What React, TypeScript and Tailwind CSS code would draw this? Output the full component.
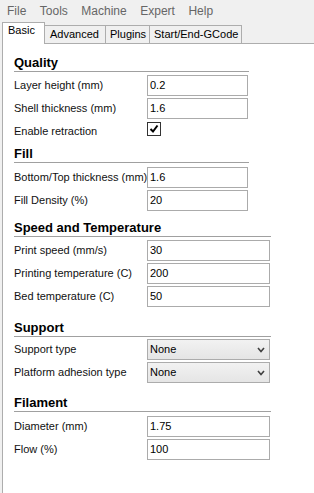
import React from 'react';

type Row =
  | { kind: 'text'; label: string; value: string }
  | { kind: 'check'; label: string; checked: boolean }
  | { kind: 'select'; label: string; value: string };

type Section = { title: string; wide: boolean; mt: string; rowsMt: string; rows: Row[] };

const SECTIONS: Section[] = [
  {
    title: 'Quality',
    wide: false,
    mt: 'mt-[11px]',
    rowsMt: 'mt-[3px]',
    rows: [
      { kind: 'text', label: 'Layer height (mm)', value: '0.2' },
      { kind: 'text', label: 'Shell thickness (mm)', value: '1.6' },
      { kind: 'check', label: 'Enable retraction', checked: true },
    ],
  },
  {
    title: 'Fill',
    wide: false,
    mt: 'mt-[4px]',
    rowsMt: 'mt-[4px]',
    rows: [
      { kind: 'text', label: 'Bottom/Top thickness (mm)', value: '1.6' },
      { kind: 'text', label: 'Fill Density (%)', value: '20' },
    ],
  },
  {
    title: 'Speed and Temperature',
    wide: true,
    mt: 'mt-[9px]',
    rowsMt: 'mt-[3px]',
    rows: [
      { kind: 'text', label: 'Print speed (mm/s)', value: '30' },
      { kind: 'text', label: 'Printing temperature (C)', value: '200' },
      { kind: 'text', label: 'Bed temperature (C)', value: '50' },
    ],
  },
  {
    title: 'Support',
    wide: true,
    mt: 'mt-[13px]',
    rowsMt: 'mt-[2px]',
    rows: [
      { kind: 'select', label: 'Support type', value: 'None' },
      { kind: 'select', label: 'Platform adhesion type', value: 'None' },
    ],
  },
  {
    title: 'Filament',
    wide: true,
    mt: 'mt-[12px]',
    rowsMt: 'mt-[4px]',
    rows: [
      { kind: 'text', label: 'Diameter (mm)', value: '1.75' },
      { kind: 'text', label: 'Flow (%)', value: '100' },
    ],
  },
];

const MENU = ['File', 'Tools', 'Machine', 'Expert', 'Help'];

function Field({ row, wide }: { row: Row; wide: boolean }) {
  const w = wide ? 'w-[123px]' : 'w-[101px]';
  if (row.kind === 'check') {
    return (
      <div className="h-[21px] flex items-start pt-[1px]">
        <div className="w-[14px] h-[14px] border border-[#333] bg-white flex items-center justify-center">
          {row.checked && (
            <svg width="10" height="10" viewBox="0 0 10 10">
              <path d="M1.5 5 L4 7.5 L8.5 1.5" fill="none" stroke="#000" strokeWidth="2" />
            </svg>
          )}
        </div>
      </div>
    );
  }
  if (row.kind === 'select') {
    return (
      <div
        className={`${w} h-[21px] border border-[#acacac] bg-gradient-to-b from-[#f2f2f2] to-[#e5e5e5] flex items-center justify-between pl-[2px] pr-[4px] text-black`}
      >
        <span>{row.value}</span>
        <svg width="8" height="6" viewBox="0 0 8 6">
          <path d="M1 1 L4 4.5 L7 1" fill="none" stroke="#404040" strokeWidth="1.6" />
        </svg>
      </div>
    );
  }
  return (
    <div className={`${w} h-[21px] border border-[#ababab] bg-white flex items-center pl-[2px] text-black`}>
      {row.value}
    </div>
  );
}

function SettingsSection({ section }: { section: Section }) {
  return (
    <div className={section.mt}>
      <div
        className={`${section.wide ? 'w-[257px]' : 'w-[235px]'} h-[17px] leading-[16px] border-b border-[#a0a0a0] text-[13px] font-bold text-black`}
      >
        {section.title}
      </div>
      <div className={`${section.rowsMt} flex flex-col gap-[2px]`}>
        {section.rows.map((row) => (
          <div key={row.label} className="flex items-start">
            <div className="w-[133px] h-[21px] flex items-center whitespace-nowrap text-[#111]">{row.label}</div>
            <Field row={row} wide={section.wide} />
          </div>
        ))}
      </div>
    </div>
  );
}

export default function App() {
  return (
    <div className="w-[314px] h-[493px] bg-[#f0f0f0] overflow-hidden flex flex-col font-['Liberation_Sans',Arial,sans-serif] text-[11px]">
      {/* Menu bar */}
      <div className="h-[22px] flex items-center pl-[7px] gap-[13.5px] text-[12px] text-[#666]">
        {MENU.map((m) => (
          <span key={m}>{m}</span>
        ))}
      </div>

      {/* Tabs */}
      <div className="h-[22px] flex items-end pl-[2px] text-black">
        <div className="w-[43px] h-[22px] bg-white border-l border-t border-r border-[#adadad] pl-[5px] pb-[6px] flex items-end">
          Basic
        </div>
        <div className="w-[61px] h-[19px] border-t border-r border-b border-[#adadad] pl-[5px] flex items-center">
          Advanced
        </div>
        <div className="w-[44px] h-[19px] border-t border-r border-b border-[#adadad] pl-[4px] flex items-center">
          Plugins
        </div>
        <div className="w-[92px] h-[19px] border-t border-r border-b border-[#adadad] pl-[4px] flex items-center">
          Start/End-GCode
        </div>
        <div className="flex-1 h-[19px] border-b border-[#adadad]" />
      </div>

      {/* Panel */}
      <div className="flex-1 ml-[2px] bg-white border-l border-[#adadad] pl-[11px]">
        {SECTIONS.map((s) => (
          <SettingsSection key={s.title} section={s} />
        ))}
      </div>
    </div>
  );
}
